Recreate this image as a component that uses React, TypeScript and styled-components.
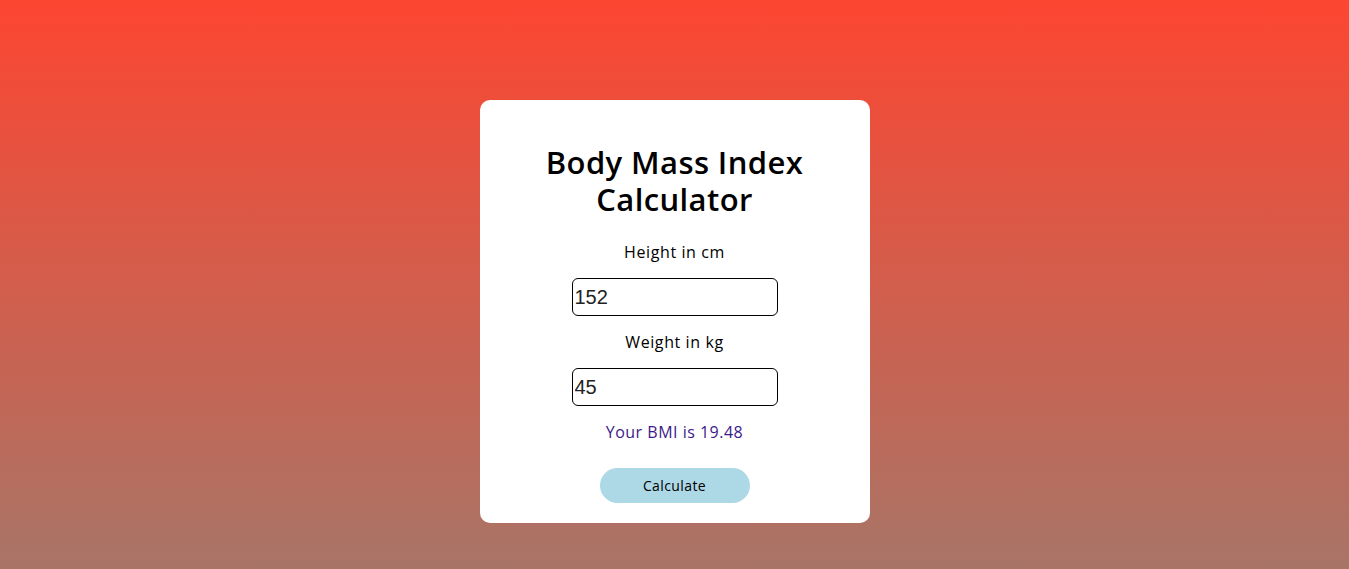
import React, { useState } from "react";
import styled, { createGlobalStyle } from "styled-components";

const Global = createGlobalStyle`
  html, body { margin: 0; padding: 0; }
  body {
    min-height: 569px;
    background: linear-gradient(180deg, #fc4631 0%, #a87567 100%);
    font-family: "Open Sans", "Liberation Sans", sans-serif;
  }
`;

const Page = styled.div`
  min-height: 569px;
  display: flex;
  justify-content: center;
  align-items: flex-start;
  padding-top: 100px;
  box-sizing: border-box;
`;

const Card = styled.div`
  width: 390px;
  height: 423px;
  box-sizing: border-box;
  background: #fff;
  border-radius: 10px;
  padding: 44px 0 0;
  display: flex;
  flex-direction: column;
  align-items: center;
`;

const Title = styled.h1`
  margin: 0;
  font-size: 31px;
  font-weight: 600;
  letter-spacing: 0.4px;
  line-height: 37px;
  text-align: center;
  color: #000;
  width: 300px;
`;

const Label = styled.label<{ $mt: number }>`
  margin-top: ${(p) => p.$mt}px;
  font-size: 16px;
  letter-spacing: 0.6px;
  line-height: 20px;
  color: #000;
`;

const Input = styled.input`
  margin-top: 16px;
  width: 206px;
  height: 38px;
  box-sizing: border-box;
  border: 1px solid #000;
  border-radius: 6px;
  padding: 0 2px;
  font-family: "Liberation Sans", Arial, sans-serif;
  font-size: 20px;
  color: #222;
  outline: none;
`;

const Result = styled.p`
  margin: 16px 0 0;
  font-size: 16px;
  letter-spacing: 0.5px;
  line-height: 20px;
  color: #3c1a8a;
`;

const Button = styled.button`
  margin-top: 26px;
  width: 150px;
  height: 35px;
  border: none;
  border-radius: 18px;
  background: #add8e6;
  font-family: "Open Sans", "Liberation Sans", sans-serif;
  font-size: 14px;
  letter-spacing: 0.4px;
  color: #000;
  cursor: pointer;
`;

export default function App() {
  const [h, setH] = useState("152");
  const [w, setW] = useState("45");
  const [bmi, setBmi] = useState("19.48");
  const calc = () => {
    const hm = parseFloat(h) / 100;
    const v = parseFloat(w) / (hm * hm);
    if (isFinite(v)) setBmi(v.toFixed(2));
  };
  return (
    <>
      <Global />
      <Page>
        <Card>
          <Title>Body Mass Index Calculator</Title>
          <Label $mt={24}>Height in cm</Label>
          <Input value={h} onChange={(e) => setH(e.target.value)} />
          <Label $mt={16}>Weight in kg</Label>
          <Input value={w} onChange={(e) => setW(e.target.value)} />
          <Result>Your BMI is {bmi}</Result>
          <Button onClick={calc}>Calculate</Button>
        </Card>
      </Page>
    </>
  );
}
